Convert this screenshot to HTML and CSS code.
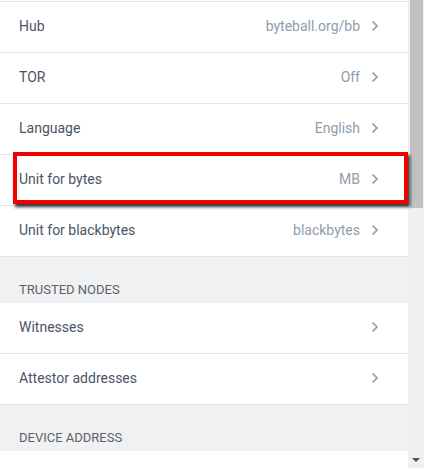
FILE: index.html
```html
<!DOCTYPE html>
<html>
<head>
<meta charset="utf-8">
<link rel="stylesheet" href="styles.css">
</head>
<body>
<div class="window">
  <div class="content">
    <div class="top-edge"></div>
    <div class="list">
      <div class="row"><span class="label">Hub</span><span class="value">byteball.org/bb</span><span class="chev"><svg width="8" height="12" viewBox="0 0 8 12"><path d="M1.5 1.5 L6 6 L1.5 10.5" fill="none" stroke="currentColor" stroke-width="1.7"/></svg></span></div>
      <div class="row"><span class="label">TOR</span><span class="value">Off</span><span class="chev"><svg width="8" height="12" viewBox="0 0 8 12"><path d="M1.5 1.5 L6 6 L1.5 10.5" fill="none" stroke="currentColor" stroke-width="1.7"/></svg></span></div>
      <div class="row"><span class="label">Language</span><span class="value">English</span><span class="chev"><svg width="8" height="12" viewBox="0 0 8 12"><path d="M1.5 1.5 L6 6 L1.5 10.5" fill="none" stroke="currentColor" stroke-width="1.7"/></svg></span></div>
      <div class="row highlighted"><span class="label">Unit for bytes</span><span class="value">MB</span><span class="chev"><svg width="8" height="12" viewBox="0 0 8 12"><path d="M1.5 1.5 L6 6 L1.5 10.5" fill="none" stroke="currentColor" stroke-width="1.7"/></svg></span><div class="annot"></div></div>
      <div class="row"><span class="label">Unit for blackbytes</span><span class="value">blackbytes</span><span class="chev"><svg width="8" height="12" viewBox="0 0 8 12"><path d="M1.5 1.5 L6 6 L1.5 10.5" fill="none" stroke="currentColor" stroke-width="1.7"/></svg></span></div>
    </div>
    <div class="section-head">TRUSTED NODES</div>
    <div class="list">
      <div class="row"><span class="label">Witnesses</span><span class="value"></span><span class="chev"><svg width="8" height="12" viewBox="0 0 8 12"><path d="M1.5 1.5 L6 6 L1.5 10.5" fill="none" stroke="currentColor" stroke-width="1.7"/></svg></span></div>
      <div class="row"><span class="label">Attestor addresses</span><span class="value"></span><span class="chev"><svg width="8" height="12" viewBox="0 0 8 12"><path d="M1.5 1.5 L6 6 L1.5 10.5" fill="none" stroke="currentColor" stroke-width="1.7"/></svg></span></div>
    </div>
    <div class="section-head">DEVICE ADDRESS</div>
    <div class="list tail"></div>
  </div>
  <div class="scrollbar">
    <div class="thumb"></div>
    <div class="spacer"></div>
    <div class="arrow"></div>
  </div>
</div>
</body>
</html>
```
FILE: styles.css
```css
html, body {
  margin: 0;
  padding: 0;
  background: #f0f1f3;
}
body {
  font-family: Roboto, "Liberation Sans", sans-serif;
}
.window {
  width: 424px;
  height: 468px;
  display: flex;
  overflow: hidden;
}
.content {
  width: 408px;
  background: #f0f1f3;
  display: flex;
  flex-direction: column;
}
.top-edge {
  height: 1px;
  background: #fff;
  border-bottom: 1px solid #e4e6e9;
}
.list {
  background: #fff;
}
.row {
  position: relative;
  height: 50px;
  border-bottom: 1px solid #e4e6e9;
  display: flex;
  align-items: center;
  padding: 0 29px 0 19px;
  font-size: 14px;
}
.label {
  color: #4a5464;
  flex: 1;
  padding-bottom: 3px;
}
.value {
  color: #8f9cab;
  padding-bottom: 3px;
}
.chev {
  color: #8f9cab;
  width: 8px;
  margin-left: 11px;
  display: flex;
  align-items: center;
  padding-bottom: 2px;
}
.section-head {
  height: 46px;
  box-sizing: border-box;
  padding: 25px 0 0 19px;
  font-size: 13px;
  color: #5d6268;
  line-height: 15px;
}
.tail {
  flex: 1;
}
.annot {
  position: absolute;
  left: 13px;
  top: -3px;
  width: 387px;
  height: 44px;
  border: 4px solid #f00000;
  box-shadow: 2px 3px 3px rgba(0,0,0,0.8);
}
.scrollbar {
  width: 16px;
  background: #f0f0f0;
  display: flex;
  flex-direction: column;
  padding-left: 2px;
  box-sizing: border-box;
}
.thumb {
  width: 13px;
  height: 208px;
  background: #c1c1c1;
}
.spacer {
  flex: 1;
}
.arrow {
  height: 17px;
  display: flex;
  justify-content: center;
  align-items: center;
  padding-right: 2px;
}
.arrow::before {
  content: "";
  border-left: 4px solid transparent;
  border-right: 4px solid transparent;
  border-top: 4px solid #505050;
}
```
